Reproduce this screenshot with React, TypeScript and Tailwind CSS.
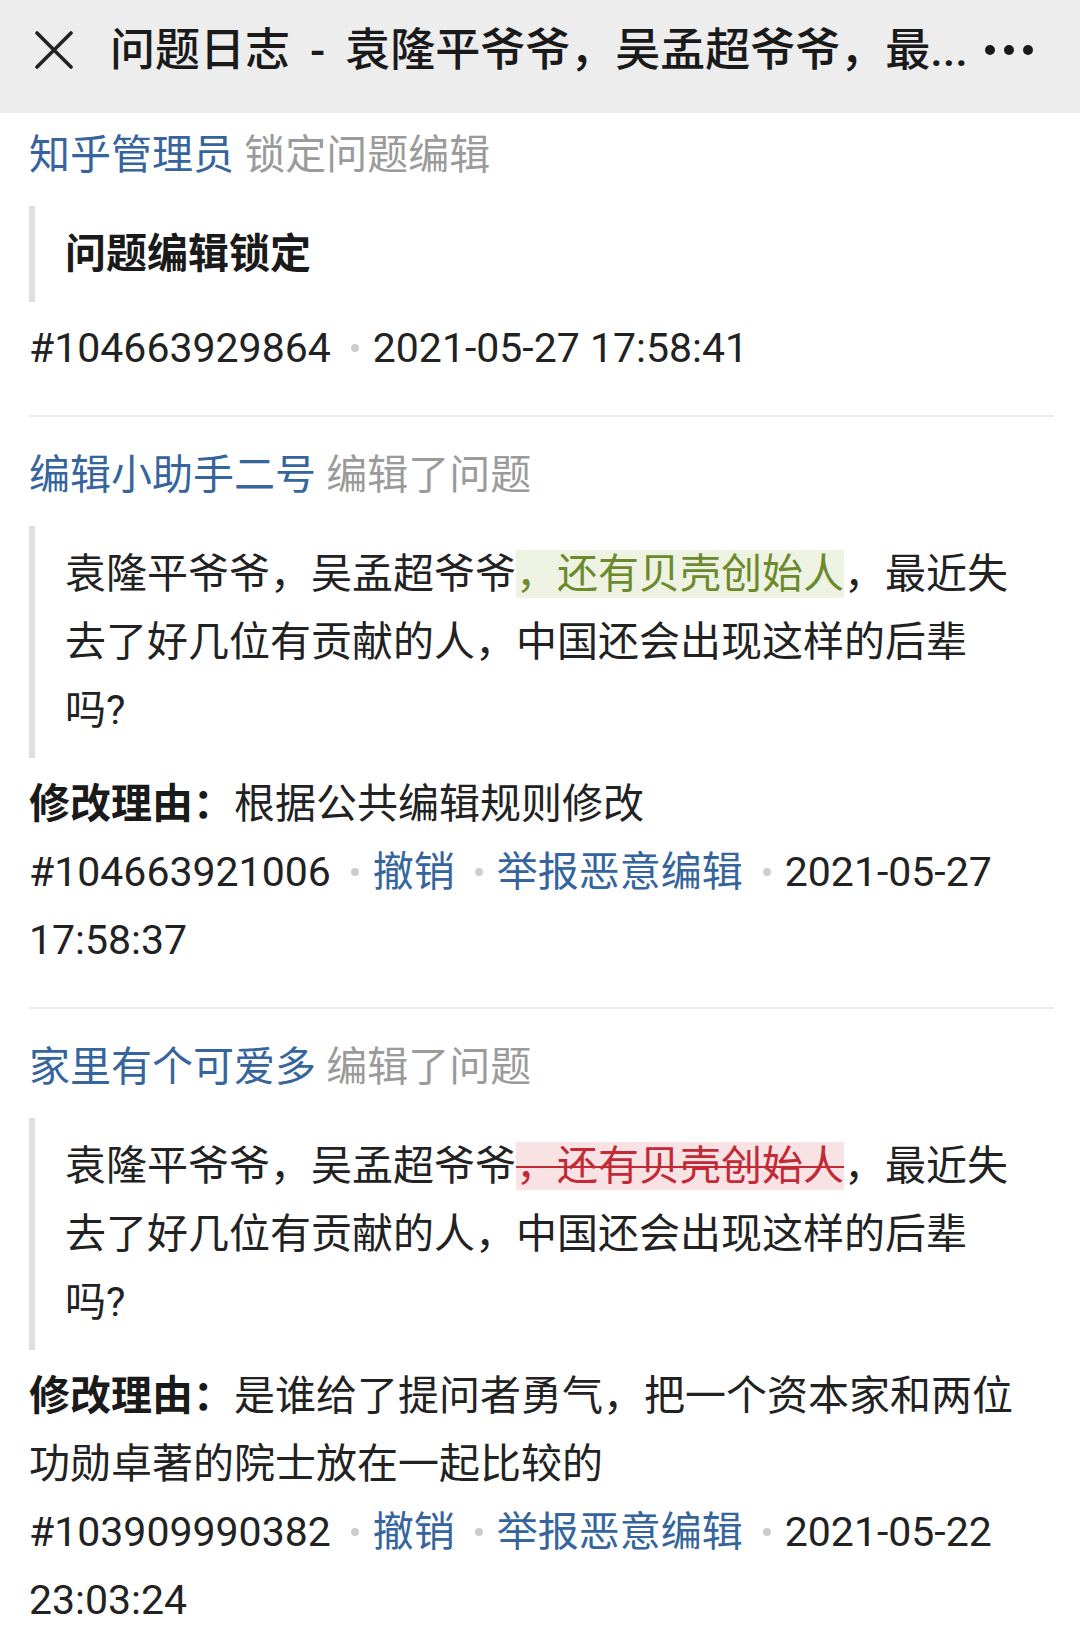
import { ReactNode } from 'react';

const font = { fontFamily: 'Roboto, "Noto Sans CJK SC", sans-serif' };

function Dot() {
  return <span className="inline-block w-[8px] h-[8px] rounded-full bg-[#cdcdcd] ml-[20px] mr-[14px] align-middle relative -top-[3px]" />;
}

function Link({ children }: { children: ReactNode }) {
  return <span className="text-[#36659e]">{children}</span>;
}

type EntryProps = {
  user: string;
  action: string;
  body: ReactNode;
  bold?: boolean;
  reason?: string;
  id: string;
  time: string;
  actions?: boolean;
  first?: boolean;
};

function Entry({ user, action, body, bold, reason, id, time, actions, first }: EntryProps) {
  return (
    <div className={first ? '' : 'mt-[24px]'}>
      <div className="leading-[68px]">
        <span className="text-[#36659e]">{user}</span>
        <span className="text-[#9b9b9b]"> {action}</span>
      </div>
      <div
        className={`mt-[17px] border-l-[6px] border-[#e0e0e0] py-[14px] pl-[30px] pr-[30px] leading-[68px] ${
          bold ? 'font-bold text-[#1a1a1a]' : 'text-[#222]'
        }`}
      >
        {body}
      </div>
      {reason && (
        <div className="mt-[12px] pr-[24px] leading-[68px] text-[#222]">
          <span className="font-bold text-[#1a1a1a]">修改理由：</span>
          {reason}
        </div>
      )}
      <div className={`${reason ? '' : 'mt-[12px]'} leading-[68px] text-[#222]`}>
        {id}
        {actions && (
          <>
            <Dot />
            <Link>撤销</Link>
            <Dot />
            <Link>举报恶意编辑</Link>
          </>
        )}
        <Dot />
        {time}
      </div>
    </div>
  );
}

function Divider() {
  return <div className="mt-[33px] h-[2px] bg-[#ececec]" />;
}

export default function App() {
  return (
    <div className="w-[1080px] min-h-[1644px] bg-white" style={font}>
      <div className="h-[113px] bg-[#ededed]">
        <div className="h-[100px] flex items-center pl-[35px] pr-[14px]">
          <svg width="38" height="38" viewBox="0 0 38 38" className="shrink-0">
            <path d="M2 2 L36 36 M36 2 L2 36" stroke="#222" strokeWidth="3.6" strokeLinecap="round" />
          </svg>
          <div className="ml-[37px] text-[45px] font-medium text-[#1a1a1a] whitespace-nowrap leading-none">
            问题日志<span className="mx-[20px]">-</span>袁隆平爷爷，吴孟超爷爷，最...
          </div>
          <svg width="50" height="12" viewBox="0 0 50 12" className="ml-[16px] shrink-0">
            <circle cx="6" cy="6" r="5" fill="#1a1a1a" />
            <circle cx="25" cy="6" r="5" fill="#1a1a1a" />
            <circle cx="44" cy="6" r="5" fill="#1a1a1a" />
          </svg>
        </div>
      </div>

      <div className="pl-[29px] pr-[26px] pt-[8px] text-[41px]">
        <Entry
          first
          user="知乎管理员"
          action="锁定问题编辑"
          bold
          body="问题编辑锁定"
          id="#104663929864"
          time="2021-05-27 17:58:41"
        />
        <Divider />
        <Entry
          user="编辑小助手二号"
          action="编辑了问题"
          body={
            <>
              袁隆平爷爷，吴孟超爷爷
              <span className="bg-[#eef2e3] text-[#6b8a2c]">，还有贝壳创始人</span>
              ，最近失去了好几位有贡献的人，中国还会出现这样的后辈吗?
            </>
          }
          reason="根据公共编辑规则修改"
          id="#104663921006"
          time="2021-05-27 17:58:37"
          actions
        />
        <Divider />
        <Entry
          user="家里有个可爱多"
          action="编辑了问题"
          body={
            <>
              袁隆平爷爷，吴孟超爷爷
              <span className="bg-[#f8e2e4] text-[#c22a36] line-through decoration-[#c22a36] decoration-[2px]">
                ，还有贝壳创始人
              </span>
              ，最近失去了好几位有贡献的人，中国还会出现这样的后辈吗?
            </>
          }
          reason="是谁给了提问者勇气，把一个资本家和两位功勋卓著的院士放在一起比较的"
          id="#103909990382"
          time="2021-05-22 23:03:24"
          actions
        />
      </div>
    </div>
  );
}
